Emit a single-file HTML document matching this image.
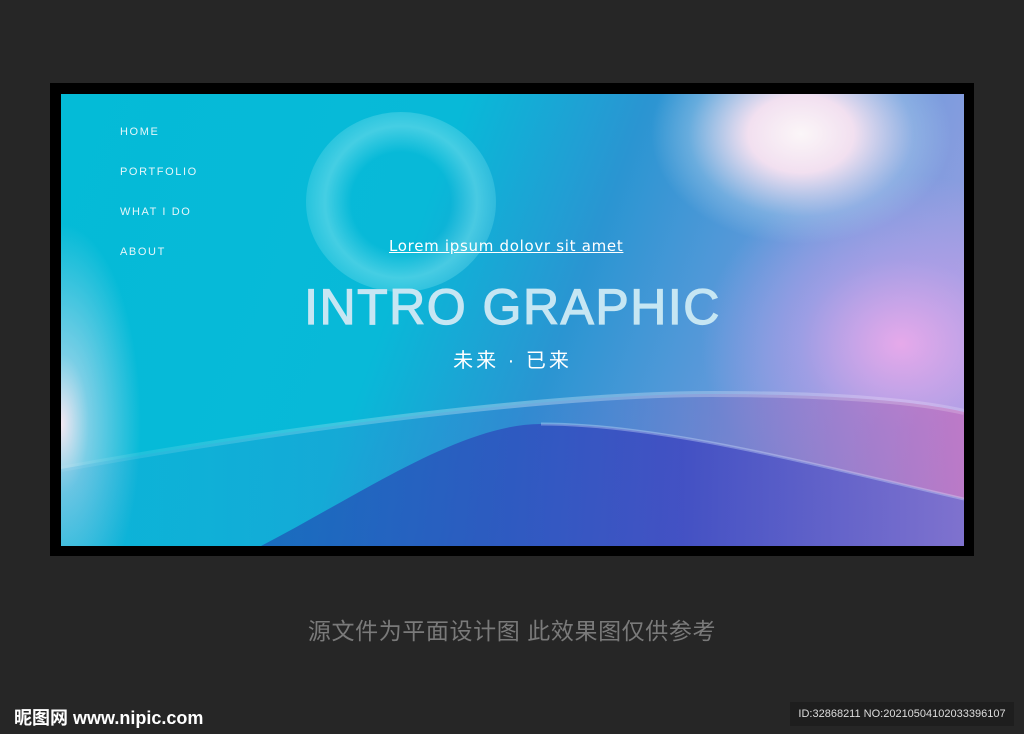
<!DOCTYPE html><html><head><meta charset="utf-8"><style>
body{margin:0;width:1024px;height:734px;background:#262626;position:relative;overflow:hidden;font-family:"Liberation Sans","Noto Sans CJK SC",sans-serif}
.frame{position:absolute;left:50px;top:83px;width:924px;height:473px;background:#000}
.scr{position:absolute;left:61px;top:94px;width:903px;height:452px;overflow:hidden;
background:
radial-gradient(ellipse 150px 110px at 740px 40px,#fbf6f8 0%,#f2e0f0 35%,rgba(170,205,235,.4) 75%,rgba(160,200,235,0) 100%),
radial-gradient(ellipse 200px 170px at 840px 250px,rgba(235,170,235,.95) 0%,rgba(200,160,235,.5) 50%,rgba(160,160,230,0) 100%),
radial-gradient(ellipse 80px 200px at 0px 330px,#f4e8f2 0%,rgba(200,220,240,.6) 35%,rgba(6,188,216,0) 100%),
linear-gradient(110deg,#04bbd7 0%,#08b9d8 38%,#2a95d2 55%,#6a9adc 75%,#a9a0e2 100%);}
.ring{position:absolute;left:245px;top:18px;width:190px;height:180px;border-radius:50%;background:radial-gradient(circle,rgba(0,180,215,.0) 38%,rgba(110,220,235,.6) 58%,rgba(110,220,235,.25) 75%,rgba(110,220,235,0) 100%)}
.nav{position:absolute;left:59px;color:#e6f6fa;font-size:11px;letter-spacing:1.6px}
.lorem{position:absolute;left:328px;top:143px;color:#fff;font-size:15px;text-decoration:underline;letter-spacing:.7px;font-family:"DejaVu Sans",sans-serif}
.title{position:absolute;left:0;width:903px;text-align:center;top:184px;font-size:50px;color:#c6e6f3;letter-spacing:1.5px;-webkit-text-stroke:1.2px #c6e6f3}
.sub{position:absolute;left:0;width:903px;text-align:center;top:250px;font-size:20px;color:#fff;letter-spacing:3px}
.cap{position:absolute;top:612px;width:1024px;text-align:center;color:#7a7a7a;font-size:23px;letter-spacing:.6px}
</style></head><body>
<div class="frame"></div>
<div class="scr">
<div class="ring"></div>
<svg width="903" height="452" style="position:absolute;left:0;top:0">
<defs>
<linearGradient id="w1" x1="0" x2="1"><stop offset="0" stop-color="#1fa0d8" stop-opacity=".2"/><stop offset=".5" stop-color="#3a7ad0" stop-opacity=".4"/><stop offset="1" stop-color="#c070c0" stop-opacity=".8"/></linearGradient>
<linearGradient id="w2" x1="0" x2="1"><stop offset="0" stop-color="#1b5db8"/><stop offset=".6" stop-color="#3a44c0"/><stop offset="1" stop-color="#7070d0"/></linearGradient>
<linearGradient id="hl" x1="0" x2="1"><stop offset="0" stop-color="#fff" stop-opacity=".1"/><stop offset=".5" stop-color="#fff" stop-opacity=".5"/><stop offset="1" stop-color="#fff" stop-opacity=".3"/></linearGradient>
</defs>
<path d="M0 375 C250 330 500 300 650 300 C780 300 860 308 903 318 L903 452 L0 452Z" fill="url(#w1)"/>
<path d="M0 375 C250 330 500 300 650 300 C780 300 860 308 903 318" stroke="url(#hl)" stroke-width="6" fill="none" opacity=".6"/>
<path d="M200 452 C300 400 400 330 480 330 C600 330 750 370 903 405 L903 452Z" fill="url(#w2)" opacity=".8"/>
<path d="M480 330 C600 330 750 370 903 405" stroke="#d8e8ff" stroke-width="3" fill="none" opacity=".35"/>
</svg>
<div class="nav" style="top:32px">HOME</div>
<div class="nav" style="top:72px">PORTFOLIO</div>
<div class="nav" style="top:112px">WHAT I DO</div>
<div class="nav" style="top:152px">ABOUT</div>
<div class="lorem">Lorem ipsum dolovr sit amet</div>
<div class="title">INTRO GRAPHIC</div>
<div class="sub">未来 · 已来</div>
</div>
<div class="cap">源文件为平面设计图 此效果图仅供参考</div>
<div style="position:absolute;left:14px;top:704px;color:#fff;font-weight:bold;font-size:18px">昵图网 www.nipic.com</div>
<div style="position:absolute;left:790px;top:702px;width:224px;height:24px;background:#1e1e1e;color:#ddd;font-size:11px;line-height:24px;text-align:center">ID:32868211 NO:20210504102033396107</div>
</body></html>
